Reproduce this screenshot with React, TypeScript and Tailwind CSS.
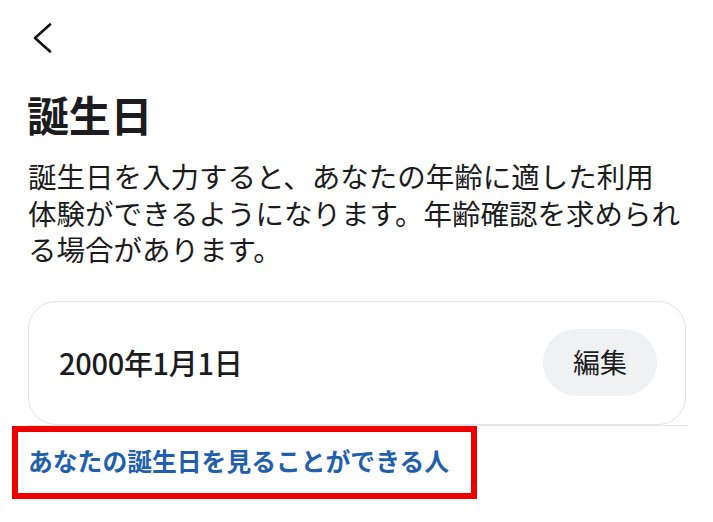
export default function App() {
  return (
    <div
      className="w-[713px] h-[522px] bg-white overflow-hidden text-[#1c1c1e]"
      style={{ fontFamily: '"Noto Sans CJK JP", "Noto Sans", sans-serif' }}
    >
      {/* Top bar */}
      <div className="pt-[23px] pl-[31px] h-[89px]">
        <svg width="22" height="30" viewBox="0 0 22 30" fill="none">
          <path d="M19 1.5 L4 15 L19 28.5" stroke="#111" strokeWidth="2.6" strokeLinecap="round" strokeLinejoin="round" />
        </svg>
      </div>

      {/* Title + description */}
      <h1 className="px-[27px] text-[42px] leading-[50px] font-semibold tracking-[-0.3px]">誕生日</h1>
      <p className="mt-[19px] px-[28px] text-[28.5px] leading-[36.5px] font-normal">
        誕生日を入力すると、あなたの年齢に適した利用
        <br />
        体験ができるようになります。年齢確認を求められ
        <br />
        る場合があります。
      </p>

      {/* Birthday card */}
      <div className="mt-[33px] ml-[28px] mr-[27px] h-[124px] rounded-[28px] border border-[#e3e3e6] flex items-center justify-between pl-[30px] pr-[28px]">
        <span className="text-[29px] font-medium tracking-[-0.3px]">2000年1月1日</span>
        <button className="h-[67px] w-[114px] rounded-full bg-[#f0f1f3] text-[27px] font-normal flex items-center justify-center">
          編集
        </button>
      </div>
      <div className="ml-[28px] mr-[25px] h-px bg-[#e6e6e8]" />

      {/* Highlighted link */}
      <div className="ml-[12px] w-[465px] h-[73px] border-[6px] border-[#ee0000] flex items-center pl-[10px]">
        <span className="text-[24.8px] font-bold text-[#1f5fae] leading-none -mt-[4px]">あなたの誕生日を見ることができる人</span>
      </div>
    </div>
  );
}
